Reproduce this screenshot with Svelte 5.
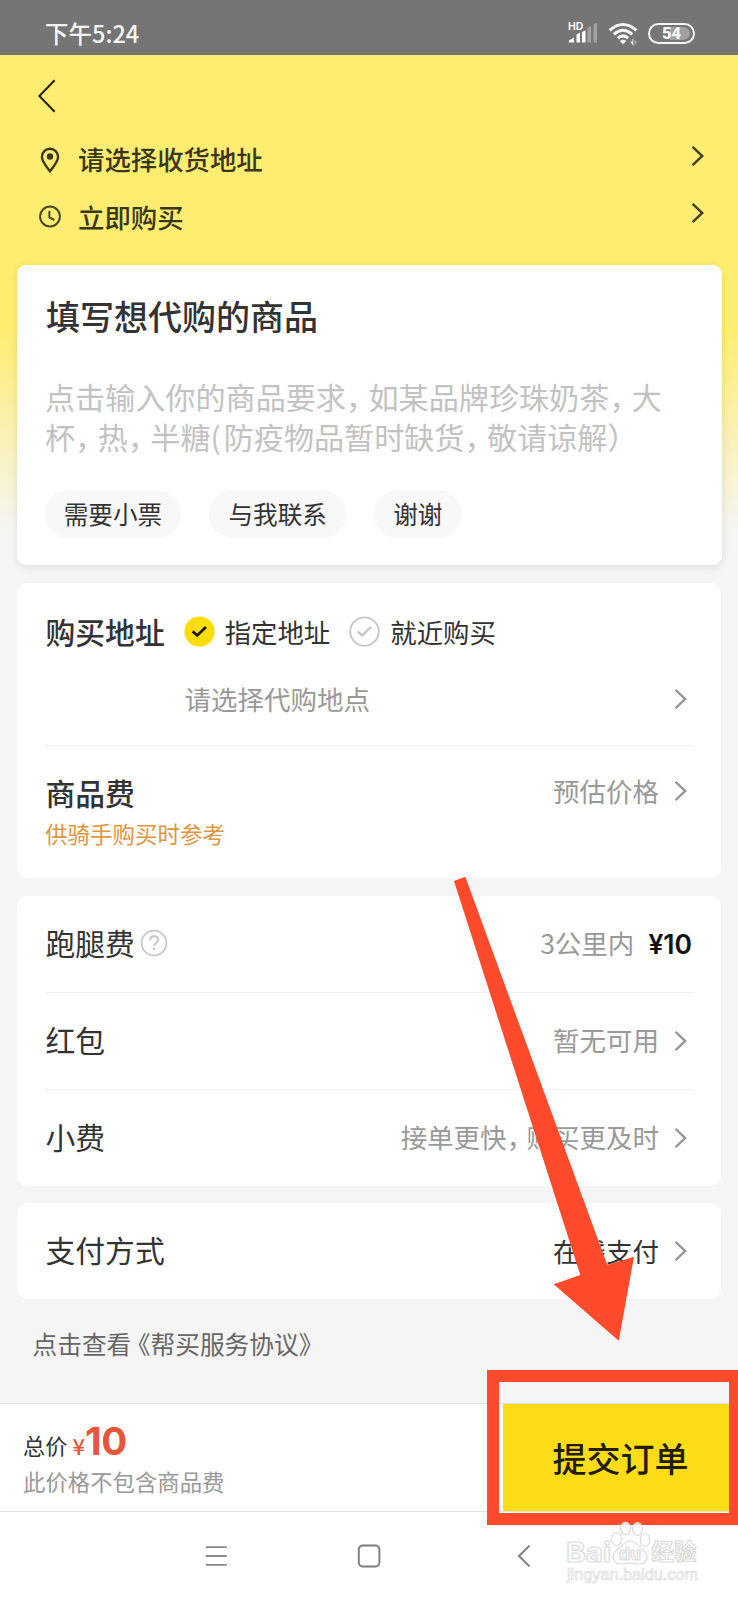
<script>
	let place = $state('assigned');

	const places = [
		{ id: 'assigned', label: '指定地址' },
		{ id: 'nearby', label: '就近购买' }
	];

	const tags = ['需要小票', '与我联系', '谢谢'];

	const placeholder = ['点击输入你的商品要求，如某品牌珍珠奶茶，大', '杯，热，半糖(防疫物品暂时缺货，敬请谅解）'];
</script>

{#snippet chevron(tone)}
	<svg class="chevron {tone}" width="13" height="22" viewBox="0 0 13 22" fill="none">
		<path d="M1.6 1.9 11.3 11 1.6 20.1" stroke="currentColor" stroke-width="2.5" />
	</svg>
{/snippet}

{#snippet phrase(text)}
	{#each text.split(/([，(])/) as part}{#if part === '，'}<span class="comma">，</span>{:else if part === '('}<span class="paren">(</span>{:else}{part}{/if}{/each}
{/snippet}

<div class="screen">
	<div class="statusbar">
		<span class="time">下午5:24</span>
		<svg class="signal" width="30" height="24" viewBox="0 0 30 24">
			<text x="0" y="9" font-size="10.5" font-weight="700" font-family="Inter, sans-serif" fill="#f4f4f4">HD</text>
			<path d="M1 21.5v-2l5-3v5zM8.5 21.5v-8l3.5-1.8v9.8zM14 21.5V11l3.5-1.8v12.3z" fill="#fff" />
			<path d="M19.5 21.5V6.8L23 4.9v16.6zM25.5 21.5v-18L29 1.7v19.8z" fill="#a2a2a2" />
		</svg>
		<svg class="wifi" width="30" height="24" viewBox="0 0 30 24" fill="none">
			<path d="M1.6 8.4Q15 -3.4 28.4 8.4M5.8 12.4Q15 4.2 24.2 12.4M9.8 16.2Q15 11.6 20.2 16.2" stroke="#f4f4f4" stroke-width="3" />
			<path d="M15 22.2 11.8 19Q15 16.4 18.2 19z" fill="#f4f4f4" />
			<path d="M22 19.5h2.4V17h1v7z" fill="#e5e5e5" />
			<path d="M26.5 17.5v6l2.8-3.5z" fill="#a0a0a0" />
		</svg>
		<div class="battery"><span class="charge"></span><b>54</b></div>
	</div>

	<div class="body">
		<header>
			<svg class="back" width="20" height="34" viewBox="0 0 20 34" fill="none">
				<path d="M17.6 1.2 2.4 17 17.6 32.8" stroke="#222012" stroke-width="2" />
			</svg>
			<div class="top-row">
				<svg width="22" height="28" viewBox="0 0 22 28" fill="none">
					<path d="M11 25.2C7.5 20.6 2.9 15.8 2.9 10.8a8.1 8.1 0 0 1 16.2 0C19.1 15.8 14.5 20.6 11 25.2z" stroke="#3a3720" stroke-width="2.4" />
					<circle cx="11" cy="10.5" r="3.2" fill="#3a3720" />
				</svg>
				<span>请选择收货地址</span>
				{@render chevron('dark')}
			</div>
			<div class="top-row">
				<svg width="22" height="28" viewBox="0 0 22 28" fill="none" stroke="#4a4628" stroke-width="2">
					<circle cx="11" cy="13.5" r="9.9" />
					<path d="M10.4 8v6.3l5 2.7" />
				</svg>
				<span>立即购买</span>
				{@render chevron('dark')}
			</div>
		</header>

		<section class="card goods">
			<h1>填写想代购的商品</h1>
			<p class="placeholder">
				{#each placeholder as line}
					<span class="line">{@render phrase(line)}</span>
				{/each}
			</p>
			<div class="tags">
				{#each tags as tag}
					<span class="tag">{tag}</span>
				{/each}
			</div>
		</section>

		<section class="card shop">
			<div class="place-row">
				<h2>购买地址</h2>
				{#each places as p}
					<button class="radio" class:on={place === p.id} onclick={() => (place = p.id)}>
						<svg width="31" height="31" viewBox="0 0 31 31" fill="none">
							<circle cx="15.5" cy="15.5" r="14.2" />
							<path d="M8.6 15.4 13.2 19.4 22 11" />
						</svg>
						<span>{p.label}</span>
					</button>
				{/each}
			</div>
			<div class="pick-row">
				<span class="muted">请选择代购地点</span>
				{@render chevron('grey')}
			</div>
			<div class="price-row">
				<div>
					<h2>商品费</h2>
					<p class="hint">供骑手购买时参考</p>
				</div>
				<div class="value">
					<span class="muted">预估价格</span>
					{@render chevron('grey')}
				</div>
			</div>
		</section>

		<section class="card fees">
			<div class="row">
				<span class="label">跑腿费</span>
				<svg class="help" width="28" height="28" viewBox="0 0 28 28" fill="none" stroke="#c6c6c6">
					<circle cx="14" cy="14" r="12.4" stroke-width="1.7" />
					<path d="M10.1 11.3c0-2.4 1.6-4 4-4s4 1.5 4 3.7c0 3-3.9 3.1-3.9 6" stroke-width="2" />
					<circle cx="14.1" cy="19.8" r="1.4" fill="#c6c6c6" stroke="none" />
				</svg>
				<div class="value">
					<span class="muted">3公里内</span>
					<b class="fee">¥10</b>
				</div>
			</div>
			<div class="row">
				<span class="label">红包</span>
				<div class="value">
					<span class="muted">暂无可用</span>
					{@render chevron('grey')}
				</div>
			</div>
			<div class="row">
				<span class="label">小费</span>
				<div class="value">
					<span class="muted">{@render phrase('接单更快，购买更及时')}</span>
					{@render chevron('grey')}
				</div>
			</div>
		</section>

		<section class="card pay">
			<div class="row">
				<span class="label">支付方式</span>
				<div class="value">
					<span>在线支付</span>
					{@render chevron('grey')}
				</div>
			</div>
		</section>

		<p class="terms">点击查<span class="tight">看</span>《帮买服务协议》</p>
	</div>

	<footer>
		<div class="sum">
			<p class="total">总价 <span class="yen">¥</span><b>10</b></p>
			<p class="note">此价格不包含商品费</p>
		</div>
		<button class="submit">提交订单</button>
	</footer>

	<nav>
		<svg width="24" height="24" viewBox="0 0 24 24" fill="none" stroke="#8a8a8a" stroke-width="1.8">
			<path d="M1.8 3.2h21M1.8 12h21M1.8 20.8h21" />
		</svg>
		<svg width="24" height="24" viewBox="0 0 24 24" fill="none" stroke="#7d7d7d" stroke-width="1.9">
			<rect x="1.8" y="1.5" width="20.6" height="21" rx="4" />
		</svg>
		<svg width="24" height="24" viewBox="0 0 24 24" fill="none" stroke="#7d7d7d" stroke-width="2">
			<path d="M19.5 1.6 9 12l10.5 10.4" />
		</svg>
	</nav>

	<!-- annotation drawn over the page -->
	<div class="frame"></div>
	<svg class="arrow" width="738" height="1600" viewBox="0 0 738 1600">
		<path d="M454 881 465.3 876.7 607.3 1265 634 1256.7 618.7 1340.7 553.7 1284.3 580.3 1275z" fill="#ff4b2b" />
	</svg>

	<div class="watermark">
		<svg width="140" height="72" viewBox="0 0 140 72" fill="#fff" stroke="#d6d6d6" stroke-width="1.2">
			<text class="brand" x="0" y="43" font-size="27.5" textLength="45" lengthAdjust="spacingAndGlyphs">Bai</text>
			<path d="M64 22c-6 0-8 5-13 9-7 6-4 14 4 14 4 0 6-1 9-1s5 1 9 1c8 0 11-8 4-14-5-4-7-9-13-9z" />
			<ellipse cx="50.5" cy="20" rx="5" ry="6.5" />
			<ellipse cx="59.5" cy="9.5" rx="5" ry="6.5" />
			<ellipse cx="71.5" cy="10" rx="5" ry="6.5" />
			<ellipse cx="79" cy="21" rx="4.8" ry="6.5" />
			<text class="brand" x="53" y="41" font-size="17.5" textLength="22" lengthAdjust="spacingAndGlyphs">du</text>
			<text class="brand cn" x="85.5" y="41" font-size="22.5">经验</text>
			<text class="site" x="1" y="61" font-size="16" textLength="131" lengthAdjust="spacingAndGlyphs">jingyan.baidu.com</text>
		</svg>
	</div>
</div>

<style>
	:global(body) {
		margin: 0;
		background: #fff;
	}

	.screen {
		position: relative;
		width: 738px;
		height: 1600px;
		overflow: hidden;
		display: flex;
		flex-direction: column;
		font-family: 'Noto Sans CJK SC', 'Noto Sans', sans-serif;
		font-size: 26.5px;
		color: #333;
	}

	h1, h2, p { margin: 0; font-weight: 500; }
	svg { display: block; flex-shrink: 0; }
	button { font-family: inherit; border: none; background: none; padding: 0; cursor: pointer; }

	.statusbar {
		height: 55px;
		box-sizing: border-box;
		padding: 12px 43px 0 45px;
		background: #757575;
		color: #f4f4f4;
		display: flex;
		align-items: flex-start;
	}
	.time { flex: 1; font-size: 23.5px; line-height: 40px; font-weight: 500; margin-top: 1px; }
	.signal { margin: 9px 10px 0 0; }
	.wifi { margin: 10px 10px 0 0; }

	.battery {
		position: relative;
		width: 47px;
		height: 21px;
		margin-top: 11px;
		box-sizing: border-box;
		border: 2px solid #f4f4f4;
		border-radius: 11px;
		text-align: center;
		font: 700 16.5px/18px Roboto, sans-serif;
	}
	.battery b { position: relative; }
	.charge {
		position: absolute;
		inset: 2px 3px 2px 20px;
		background: #a0a0a0;
		border-radius: 0 7px 7px 0;
	}

	.body {
		height: 1348px;
		box-sizing: border-box;
		padding: 0 17px;
		background: linear-gradient(#ffed71 0, #ffed71 275px, #f5f5f5 478px);
	}

	header {
		height: 209.5px;
		box-sizing: border-box;
		padding: 24px 18px 0 22px;
	}
	.back { margin-left: -2px; }

	.top-row {
		height: 57.5px;
		display: flex;
		align-items: center;
		font-weight: 500;
		font-size: 26.4px;
		color: #3a3720;
	}
	.back + .top-row { margin-top: 18px; }
	.top-row span { flex: 1; margin: -2px 0 0 17px; }

	.chevron { margin-right: 6px; }
	.dark { margin: 0 -1px 8px 0; color: #443f22; }
	.grey { color: #999; }

	.comma { letter-spacing: -.25em; }
	.paren { letter-spacing: .1em; }

	.card {
		box-sizing: border-box;
		padding: 0 28px;
		margin-bottom: 17.5px;
		background: #fff;
		border-radius: 11px;
	}

	.goods {
		height: 300.5px;
		padding: 28px 28.5px 0;
		margin: 0 -.5px 18px;
		border-radius: 9px;
		box-shadow: 0 2px 9px rgba(0, 0, 0, .1);
	}
	.goods h1 { font-size: 34px; line-height: 46px; padding-left: 1px; }

	.placeholder {
		margin-top: 37px;
		font-size: 30.1px;
		line-height: 40px;
		font-weight: 400;
		color: #c2c2c2;
	}
	.line { display: block; white-space: nowrap; }

	.tags { display: flex; gap: 28px; margin: 34px 0 0 -.5px; }
	.tag {
		height: 48px;
		padding: 0 19.2px;
		border-radius: 24px;
		background: #f8f8f8;
		font-size: 24.6px;
		line-height: 47px;
	}

	.shop { height: 295px; padding-top: 24px; }
	h2 { font-size: 29.8px; line-height: 40px; padding-left: .5px; }

	.place-row { display: flex; align-items: center; height: 48px; }
	.place-row h2 { margin-top: -1px; }
	.radio {
		display: flex;
		align-items: center;
		margin-left: 19px;
		font-size: 26.4px;
		line-height: 40px;
		color: #333;
	}
	.radio svg { margin-top: 1px; }
	.radio span { margin: 1px 0 0 10px; }
	.radio circle { stroke: #c6c6c6; stroke-width: 1.8; }
	.radio path { stroke: #c6c6c6; stroke-width: 2.4; }
	.radio.on circle { fill: #ffdd0a; stroke: #ffdd0a; }
	.radio.on path { stroke: #1d1a05; stroke-width: 2.8; }

	.muted { color: #999; }

	.pick-row {
		display: flex;
		align-items: center;
		justify-content: space-between;
		height: 87px;
		padding: 0 0 3px 139.5px;
		border-bottom: 1px solid #f0f0f0;
	}

	.price-row {
		display: flex;
		justify-content: space-between;
		align-items: flex-start;
		padding-top: 26px;
	}
	.price-row .value { height: 38px; }
	.hint { font-size: 22.5px; line-height: 42px; font-weight: 400; color: #e0953f; }

	.value { display: flex; align-items: center; margin-left: auto; }
	.value > span { margin-top: -2px; }
	.value .chevron { margin-left: 15px; }

	.row { display: flex; align-items: center; height: 96px; }
	.row + .row { border-top: 1px solid #f0f0f0; }
	.label { font-size: 29.8px; margin-top: -4px; padding-left: .5px; }
	.help { margin: -2px 0 0 5px; }
	.fee { margin: 0 1px 0 14px; color: #111; font: 600 26.5px/40px Inter, sans-serif; }

	.terms { padding-left: 15.5px; font-size: 24.7px; line-height: 53px; font-weight: 400; color: #666; }
	.tight { letter-spacing: -.22em; }

	footer {
		height: 109px;
		box-sizing: border-box;
		border-top: 1px solid #e2e2e2;
		border-bottom: 1px solid #e2e2e2;
		background: #fff;
		display: flex;
		justify-content: space-between;
	}
	.sum { padding: 13px 0 0 23px; }
	.total { display: flex; align-items: baseline; height: 44px; font-size: 22.2px; line-height: 48px; font-weight: 400; white-space: nowrap; }
	.yen { margin-left: 5px; color: #e6573a; font-weight: 500; }
	.total b { font: 700 38.5px/48px Inter, sans-serif; letter-spacing: -.5px; color: #e6573a; }
	.note { font-size: 22.4px; line-height: 40px; font-weight: 400; color: #999; }
	.submit { width: 235px; background: #ffdc18; color: #221d03; font-size: 34px; font-weight: 500; }

	nav {
		flex: 1;
		background: #fff;
		display: flex;
		justify-content: center;
		gap: 129px;
		padding-top: 32px;
	}

	.frame {
		position: absolute;
		left: 487px;
		top: 1370px;
		width: 254px;
		height: 155px;
		box-sizing: border-box;
		border: 12.5px solid #ff4b2b;
	}
	.arrow { position: absolute; left: 0; top: 0; pointer-events: none; }

	.watermark { position: absolute; left: 566px; top: 1519px; opacity: .85; }
	.brand { font-family: Inter, sans-serif; font-weight: 700; }
	.cn { font-family: 'Noto Sans CJK SC', sans-serif; }
	.site { font-family: 'Liberation Sans', sans-serif; stroke-width: .7; }
</style>
